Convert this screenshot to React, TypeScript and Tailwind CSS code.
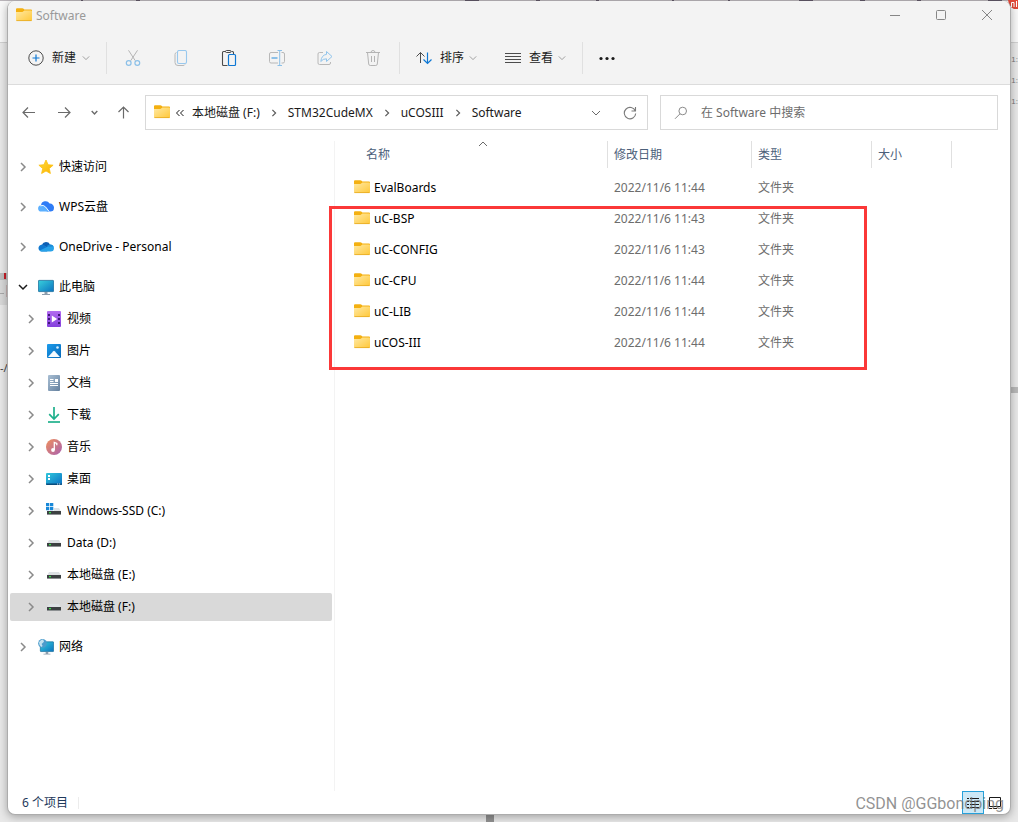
import React, { useState } from 'react';

type IconProps = { className?: string };

interface TreeItem {
  label: string;
  icon: React.ReactNode;
}

interface FileRow {
  name: string;
  modified: string;
  type: string;
}

function FolderIcon({ className = '' }: IconProps) {
  return (
    <svg viewBox="0 0 16 16" className={`h-4 w-4 shrink-0 ${className}`} aria-hidden="true">
      <defs>
        <linearGradient id="folder" x1="0" y1="0" x2="1" y2="1">
          <stop offset="0" stopColor="#ffe9a4" />
          <stop offset="1" stopColor="#ffc83a" />
        </linearGradient>
      </defs>
      <path d="M0 1.200Q0 .2 1 .2h5.200q.6 0 1 .4L8.400 1.500H15q1 0 1 1v8H0z" fill="#f4b010" />
      <path d="M0 4h6.400L8.400 2.400H15q1 0 1 1v8.500q0 1-1 1H1q-1 0-1-1z" fill="url(#folder)" />
      <path d="M.4 12.600h15.200" stroke="#e6a820" strokeWidth=".8" />
    </svg>
  );
}

function Chevron({ dir, className = '' }: { dir: 'right' | 'down' | 'up'; className?: string }) {
  const paths = {
    right: 'M3 1l4 4-4 4',
    down: 'M1 3l4 4 4-4',
    up: 'M1 7l4-4 4 4',
  };
  return (
    <svg viewBox="0 0 10 10" fill="none" stroke="currentColor" className={`shrink-0 ${className}`} aria-hidden="true">
      <path d={paths[dir]} />
    </svg>
  );
}

const iconClass = 'h-4 w-4 shrink-0';

const StarIcon = () => (
  <svg viewBox="0 0 16 16" className={iconClass} aria-hidden="true">
    <defs>
      <linearGradient id="star" x1="0" y1="0" x2="1" y2="1">
        <stop offset="0" stopColor="#ffdc3c" />
        <stop offset="1" stopColor="#fbb200" />
      </linearGradient>
    </defs>
    <path d="M8 1l2.1 4.7 5 .5-3.8 3.3 1.1 5L8 12l-4.400 2.500 1.100-5L.9 6.200l5-.5z" fill="url(#star)" stroke="#fcc010" strokeWidth=".8" strokeLinejoin="round" />
  </svg>
);

const WpsCloudIcon = () => (
  <svg viewBox="0 0 16 16" className={iconClass} aria-hidden="true">
    <path d="M3 6.400A4.600 4.600 0 0 1 11.600 4.600 4 4 0 0 1 16 8.700a3.900 3.900 0 0 1-3.800 3.900H9z" fill="#2f7cf6" />
    <path d="M3.200 6.200Q5.600 5.400 7.500 7.600l4.200 5H3.400A3.200 3.200 0 0 1 3.200 6.200z" fill="#5cb0ff" />
    <path d="M2.400 6.800q3-1.400 5.200 1.200l3.600 4.600" fill="none" stroke="#fff" strokeWidth=".9" />
  </svg>
);

const OneDriveIcon = () => (
  <svg viewBox="0 0 16 16" className={iconClass} aria-hidden="true">
    <path d="M4 5.600A4.400 4.400 0 0 1 12 5.400l-3 3.400z" fill="#0d5fb4" />
    <path d="M3.600 12.600A3.500 3.500 0 1 1 5.600 6L12 9.600l-3 3z" fill="#1078d0" />
    <path d="M12 5.400a3.700 3.700 0 0 1 4 3.700 3.500 3.500 0 0 1-3.600 3.500H3.600q-1.200 0-2.300-.8L10 7.400z" fill="#28a2e8" />
    <path d="M11.800 5.400q2.800 0 3.800 2.200L9.800 7.800 8.600 7z" fill="#1a8ad8" />
  </svg>
);

const Monitor = () => (
  <>
    <defs>
      <linearGradient id="screen" x1="0" y1="0" x2="1" y2="1">
        <stop offset="0" stopColor="#38d0dc" />
        <stop offset="1" stopColor="#0b72c0" />
      </linearGradient>
    </defs>
    <rect x=".4" y="1.4" width="15.2" height="11.2" rx=".6" fill="url(#screen)" stroke="#1a6f9c" strokeWidth=".8" />
    <path d="M6.500 13h3v2h-3zM4 15h8v.9H4z" fill="#8d9dac" />
  </>
);

const PcIcon = () => (
  <svg viewBox="0 0 16 16" className={iconClass} aria-hidden="true">
    <Monitor />
  </svg>
);

const NetworkIcon = () => (
  <svg viewBox="0 0 16 16" className={iconClass} aria-hidden="true">
    <g transform="translate(2 1.600) scale(.87)">
      <Monitor />
    </g>
    <circle cx="4.500" cy="4.400" r="4.300" fill="#4c9ccc" />
    <path d="M1 3.200Q3 .2 5.200.6L6 2.800 3.600 5l1 2-1.400 1Q1 6.800 1 3.200z" fill="#c3e2f0" />
  </svg>
);

const VideoIcon = () => (
  <svg viewBox="0 0 16 16" className={iconClass} aria-hidden="true">
    <defs>
      <linearGradient id="video" x1="0" y1="0" x2="0" y2="1">
        <stop offset="0" stopColor="#b36cf0" />
        <stop offset="1" stopColor="#8440dc" />
      </linearGradient>
    </defs>
    <rect x="1" y="0" width="14" height="16" rx="1" fill="url(#video)" />
    <path d="M2 3h2v2H2zM2 7h2v2H2zM2 11h2v2H2zM12 3h2v2h-2zM12 7h2v2h-2zM12 11h2v2h-2z" fill="#401878" />
    <path d="M5.800 4.600l5.400 3.400-5.400 3.400z" fill="#fff" />
  </svg>
);

const PictureIcon = () => (
  <svg viewBox="0 0 16 16" className={iconClass} aria-hidden="true">
    <defs>
      <linearGradient id="picture" x1="0" y1="0" x2="1" y2="1">
        <stop offset="0" stopColor="#1c9cec" />
        <stop offset="1" stopColor="#0668b8" />
      </linearGradient>
    </defs>
    <rect x="1" y="1" width="14" height="14" rx="1" fill="url(#picture)" />
    <path d="M2 14l5.300-5.800q.7-.7 1.400 0L14 14z" fill="#f4faff" />
    <circle cx="11.500" cy="4.500" r="1.300" fill="#d8f0ff" />
  </svg>
);

const DocumentIcon = () => (
  <svg viewBox="0 0 16 16" className={iconClass} aria-hidden="true">
    <defs>
      <linearGradient id="document" x1="0" y1="0" x2="1" y2="1">
        <stop offset="0" stopColor="#a9bfd4" />
        <stop offset="1" stopColor="#64809e" />
      </linearGradient>
    </defs>
    <rect x="2" y="0" width="12" height="16" rx="1" fill="url(#document)" />
    <path d="M4 4.500h3.500M4 6.500h3.500M4 8.500h8M4 10.500h8" stroke="#fff" />
    <path d="M9 4h3v3H9z" fill="#fff" />
  </svg>
);

const DownloadIcon = () => (
  <svg viewBox="0 0 16 16" className={iconClass} fill="none" stroke="#1fb08c" strokeWidth="1.700" aria-hidden="true">
    <path d="M8 0v12M3.200 7.200L8 12l4.800-4.800" />
    <path d="M2 15h12" />
  </svg>
);

const MusicIcon = () => (
  <svg viewBox="0 0 16 16" className={iconClass} aria-hidden="true">
    <defs>
      <linearGradient id="music" x1="0" y1="0" x2="1" y2="1">
        <stop offset="0" stopColor="#f0905c" />
        <stop offset="1" stopColor="#a860b0" />
      </linearGradient>
    </defs>
    <circle cx="8" cy="8" r="8" fill="url(#music)" />
    <circle cx="7" cy="11" r="1.900" fill="#fff" />
    <path d="M8.300 11V3.500l2.500 1v1.700" fill="none" stroke="#fff" strokeWidth="1.300" />
  </svg>
);

const DesktopIcon = () => (
  <svg viewBox="0 0 16 16" className={iconClass} aria-hidden="true">
    <defs>
      <linearGradient id="desktop" x1="0" y1="0" x2="1" y2="1">
        <stop offset="0" stopColor="#30c8dc" />
        <stop offset="1" stopColor="#0a70c4" />
      </linearGradient>
    </defs>
    <rect y="2" width="16" height="12" rx="1" fill="url(#desktop)" />
    <path d="M0 12.500h16v.5q0 1-1 1H1q-1 0-1-1z" fill="#0a4c7c" />
    <path d="M2 4h2v2H2zM2 7h2v2H2z" fill="#fff" />
    <path d="M11 13h1.200M13 13h1.200" stroke="#fff" strokeWidth=".8" />
  </svg>
);

const DriveIcon = ({ system = false }: { system?: boolean }) => (
  <svg viewBox="0 0 16 16" className={iconClass} aria-hidden="true">
    <path d="M3 5h10l2 3.500H1z" fill="#dde1e4" />
    <path d="M1 8h14v4H1z" fill="#3c4042" />
    <path d="M1 11h14v1H1z" fill="#8c9092" />
    <path d="M3 9h2v1.300H3z" fill="#38e048" />
    {system && (
      <>
        <path d="M0 0h8v8H0z" fill="#fff" />
        <path d="M0 0h3.300v3.300H0zM4 0h3.300v3.300H4zM0 4h3.300v3.300H0zM4 4h3.300v3.300H4z" fill="#1888d8" />
      </>
    )}
  </svg>
);

const CutIcon = () => (
  <svg viewBox="0 0 16 16" className={iconClass} fill="none" aria-hidden="true">
    <path d="M3.500.3l6.800 10.400M12.500.3L5.700 10.700" stroke="#b4b4b4" />
    <circle cx="3.700" cy="13" r="2.400" stroke="#8cc0e8" strokeWidth="1.200" />
    <circle cx="12.300" cy="13" r="2.400" stroke="#8cc0e8" strokeWidth="1.200" />
  </svg>
);

const CopyIcon = () => (
  <svg viewBox="0 0 16 16" className={iconClass} fill="none" aria-hidden="true">
    <path d="M3.500 2.500q-1.500.3-1.500 2v8Q2 15.500 5 15.500h5q1.500 0 2-1" stroke="#b8b8b8" />
    <rect x="4.500" y=".5" width="9" height="13" rx="1.500" stroke="#98c8ee" strokeWidth="1.100" />
  </svg>
);

const PasteIcon = () => (
  <svg viewBox="0 0 16 16" className={iconClass} fill="none" aria-hidden="true">
    <path d="M6.500 15.500h-4q-1 0-1-1v-12q0-1 1-1h2M10.500 1.500h1q1 0 1 1V4" stroke="#4c4c4c" strokeWidth="1.100" />
    <rect x="4.500" y=".5" width="5.500" height="2" rx="1" stroke="#4c4c4c" />
    <rect x="7.500" y="4.500" width="7" height="11" rx="1" fill="#f3f3f3" stroke="#0f78d4" strokeWidth="1.200" />
  </svg>
);

const RenameIcon = () => (
  <svg viewBox="0 0 16 16" className={iconClass} fill="none" aria-hidden="true">
    <path d="M9 2.500H2q-1.500 0-1.500 1.500v7.500Q.5 13 2 13h7M12.500 2.500H14q1.500 0 1.500 1.500v7.500q0 1.500-1.500 1.500h-1.500" stroke="#b8b8b8" />
    <path d="M2.500 8h6" stroke="#8cc0e8" strokeWidth="2" />
    <path d="M8.500.5h4.500M8.500 15.500h4.500M10.700.5v15" stroke="#8cc0e8" />
  </svg>
);

const ShareIcon = () => (
  <svg viewBox="0 0 16 16" className={iconClass} fill="none" aria-hidden="true">
    <path d="M6 2.500H2.500q-1.500 0-1.500 1.500v9q0 1.500 1.500 1.500h9.500q1.500 0 1.500-1.500v-1" stroke="#b8b8b8" />
    <path d="M9.500 1.500l5.500 5-5.500 5V8.800Q6 8.600 3.800 11.500 4.500 5 9.500 4.400z" stroke="#90c4ec" strokeLinejoin="round" />
  </svg>
);

const TrashIcon = () => (
  <svg viewBox="0 0 16 16" className={iconClass} fill="none" stroke="#b4b4b4" aria-hidden="true">
    <path d="M1 2.500h14M6 2.500Q6 .5 8 .5t2 2M2.500 2.500l1.200 11.500q.2 1.500 1.500 1.500h5.600q1.300 0 1.500-1.500L13.500 2.500M6.500 6v6M9.500 6v6" />
  </svg>
);

const files: FileRow[] = [
  { name: 'EvalBoards', modified: '2022/11/6 11:44', type: '文件夹' },
  { name: 'uC-BSP', modified: '2022/11/6 11:43', type: '文件夹' },
  { name: 'uC-CONFIG', modified: '2022/11/6 11:43', type: '文件夹' },
  { name: 'uC-CPU', modified: '2022/11/6 11:44', type: '文件夹' },
  { name: 'uC-LIB', modified: '2022/11/6 11:44', type: '文件夹' },
  { name: 'uCOS-III', modified: '2022/11/6 11:44', type: '文件夹' },
];

const roots: TreeItem[] = [
  { label: '快速访问', icon: <StarIcon /> },
  { label: 'WPS云盘', icon: <WpsCloudIcon /> },
  { label: 'OneDrive - Personal', icon: <OneDriveIcon /> },
];

const pcItems: TreeItem[] = [
  { label: '视频', icon: <VideoIcon /> },
  { label: '图片', icon: <PictureIcon /> },
  { label: '文档', icon: <DocumentIcon /> },
  { label: '下载', icon: <DownloadIcon /> },
  { label: '音乐', icon: <MusicIcon /> },
  { label: '桌面', icon: <DesktopIcon /> },
  { label: 'Windows-SSD (C:)', icon: <DriveIcon system /> },
  { label: 'Data (D:)', icon: <DriveIcon /> },
  { label: '本地磁盘 (E:)', icon: <DriveIcon /> },
  { label: '本地磁盘 (F:)', icon: <DriveIcon /> },
];

const tools = [
  { label: '剪切', icon: <CutIcon />, disabled: true },
  { label: '复制', icon: <CopyIcon />, disabled: true },
  { label: '粘贴', icon: <PasteIcon />, disabled: false },
  { label: '重命名', icon: <RenameIcon />, disabled: true },
  { label: '共享', icon: <ShareIcon />, disabled: true },
  { label: '删除', icon: <TrashIcon />, disabled: true },
];

const crumbs = ['本地磁盘 (F:)', 'STM32CudeMX', 'uCOSIII', 'Software'];

function TitleBar() {
  return (
    <header className="flex h-[30px] items-center pl-2 text-[#999999]">
      <FolderIcon />
      <h1 className="ml-1 flex-1">Software</h1>
      <div className="flex self-start">
        <button type="button" aria-label="最小化" className="flex h-7 w-[46px] items-center justify-center">
          <svg viewBox="0 0 10 10" className="h-[10px] w-[10px]" stroke="#868686">
            <path d="M0 5.500h10" />
          </svg>
        </button>
        <button type="button" aria-label="最大化" className="flex h-7 w-[46px] items-center justify-center">
          <svg viewBox="0 0 10 10" className="h-[10px] w-[10px]" stroke="#868686" fill="none">
            <rect x=".5" y=".5" width="9" height="9" rx="1" />
          </svg>
        </button>
        <button type="button" aria-label="关闭" className="flex h-7 w-[46px] items-center justify-center">
          <svg viewBox="0 0 10 10" className="h-[10px] w-[10px]" stroke="#868686">
            <path d="M0 0l10 10M10 0L0 10" />
          </svg>
        </button>
      </div>
    </header>
  );
}

function Toolbar() {
  return (
    <div role="toolbar" className="flex h-[54px] items-center border-b border-[#dcdcdc] pl-5 pt-px text-[#1a1a1a]">
      <button type="button" className="flex items-center">
        <svg viewBox="0 0 16 16" className={iconClass} fill="none" aria-hidden="true">
          <circle cx="8" cy="8" r="7.200" stroke="#4c4c4c" />
          <path d="M8 4.500v7M4.500 8h7" stroke="#0f78d4" strokeWidth="1.200" />
        </svg>
        <span className="ml-2">新建</span>
        <Chevron dir="down" className="ml-[6px] h-2 w-2 text-[#8a8a8a]" />
      </button>
      <span className="ml-4 h-8 w-px bg-[#e0e0e0]" />
      <div className="ml-[18px] flex gap-8">
        {tools.map((tool) => (
          <button key={tool.label} type="button" aria-label={tool.label} disabled={tool.disabled}>
            {tool.icon}
          </button>
        ))}
      </div>
      <span className="ml-[18px] h-8 w-px bg-[#e0e0e0]" />
      <button type="button" className="ml-4 flex items-center">
        <svg viewBox="0 0 16 16" className={iconClass} fill="none" aria-hidden="true">
          <path d="M4.500 13V2.500M.5 6.500l4-4 4 4" stroke="#4c4c4c" />
          <path d="M11.500 2.500V13.500M7.500 9.500l4 4 4-4" stroke="#0f78d4" strokeWidth="1.200" />
        </svg>
        <span className="ml-2">排序</span>
        <Chevron dir="down" className="ml-[5px] h-2 w-2 text-[#8a8a8a]" />
      </button>
      <button type="button" className="ml-7 flex items-center">
        <svg viewBox="0 0 16 16" className={iconClass} stroke="#4c4c4c" aria-hidden="true">
          <path d="M0 3.500h16M0 6.500h16M0 9.500h16M0 12.500h16" />
        </svg>
        <span className="ml-2">查看</span>
        <Chevron dir="down" className="ml-[5px] h-2 w-2 text-[#8a8a8a]" />
      </button>
      <span className="ml-4 h-8 w-px bg-[#e0e0e0]" />
      <button type="button" aria-label="更多" className="ml-4">
        <svg viewBox="0 0 16 16" className={iconClass} fill="#1a1a1a" aria-hidden="true">
          <circle cx="2" cy="8.500" r="1.600" />
          <circle cx="8" cy="8.500" r="1.600" />
          <circle cx="14" cy="8.500" r="1.600" />
        </svg>
      </button>
    </div>
  );
}

function AddressRow() {
  const [query, setQuery] = useState('');

  return (
    <div className="flex h-[51px] items-center pr-3 pt-1 text-[#1a1a1a]">
      <nav aria-label="导航" className="flex w-[137px] shrink-0 items-center pl-[14px] text-[#6a6a6a]">
        <button type="button" aria-label="后退">
          <svg viewBox="0 0 14 14" className="h-[14px] w-[14px]" fill="none" stroke="currentColor" strokeWidth="1.200">
            <path d="M13 6.500H1M6 1.500l-5 5 5 5" />
          </svg>
        </button>
        <button type="button" aria-label="前进" className="ml-[21px]">
          <svg viewBox="0 0 14 14" className="h-[14px] w-[14px]" fill="none" stroke="currentColor" strokeWidth="1.200">
            <path d="M1 6.500h12M8 1.500l5 5-5 5" />
          </svg>
        </button>
        <button type="button" aria-label="最近浏览的位置" className="ml-5">
          <Chevron dir="down" className="h-[7px] w-[7px] stroke-2" />
        </button>
        <button type="button" aria-label="上移" className="ml-[19px]">
          <svg viewBox="0 0 14 14" className="h-[14px] w-[14px]" fill="none" stroke="currentColor" strokeWidth="1.200">
            <path d="M6.500 12.500V1M1.500 6l5-5 5 5" />
          </svg>
        </button>
      </nav>
      <div className="flex h-[35px] min-w-0 flex-1 items-center border border-[#d9d9d9] bg-white pl-2">
        <FolderIcon />
        <svg viewBox="0 0 8 8" className="ml-[6px] h-2 w-2 shrink-0" fill="none" stroke="#1a1a1a" aria-hidden="true">
          <path d="M3.500 1l-3 3 3 3M7.500 1l-3 3 3 3" />
        </svg>
        <ol className="ml-2 flex flex-1 items-center gap-[10px] whitespace-nowrap">
          {crumbs.map((crumb, index) => (
            <li key={crumb} className="flex items-center gap-[10px]">
              {index > 0 && <Chevron dir="right" className="h-2 w-2 stroke-[1.5] text-[#5a5a5a]" />}
              <a href="#">{crumb}</a>
            </li>
          ))}
        </ol>
        <button type="button" aria-label="以前的位置">
          <Chevron dir="down" className="h-[10px] w-[10px] text-[#6a6a6a]" />
        </button>
        <button type="button" aria-label="刷新" className="ml-[22px] mr-[10px]">
          <svg viewBox="0 0 14 14" className="h-[14px] w-[14px]" fill="none" stroke="#7a7a7a" strokeWidth="1.100">
            <path d="M12.300 5A5.700 5.700 0 1 0 12.700 7.500M12.500 1v4h-4" />
          </svg>
        </button>
      </div>
      <label className="ml-3 flex h-[35px] w-[338px] items-center border border-[#d9d9d9] bg-white pl-[13px]">
        <svg viewBox="0 0 14 14" className="h-[14px] w-[14px] shrink-0" fill="none" stroke="#8a8a8a" aria-hidden="true">
          <circle cx="8.700" cy="5" r="3.800" />
          <path d="M6 7.800L1 12.800" />
        </svg>
        <input
          type="search"
          aria-label="搜索"
          value={query}
          onChange={(e) => setQuery(e.target.value)}
          placeholder="在 Software 中搜索"
          className="ml-[13px] min-w-0 flex-1 bg-transparent outline-none placeholder:text-[#6c6c6c]"
        />
      </label>
    </div>
  );
}

function Sidebar() {
  const [selected, setSelected] = useState('本地磁盘 (F:)');

  const row = (item: TreeItem, child: boolean, open = false) => (
    <li key={item.label}>
      <button
        type="button"
        onClick={() => setSelected(item.label)}
        className={`flex h-7 w-full items-center rounded-xs ${child ? 'pl-4' : 'pl-2'} ${
          selected === item.label ? 'bg-[#d9d9d9]' : ''
        }`}
      >
        <Chevron
          dir={open ? 'down' : 'right'}
          className={`h-[10px] w-[10px] stroke-[1.5] ${open ? 'text-[#1a1a1a]' : 'text-[#8a8a8a]'}`}
        />
        <span className="ml-[10px]">{item.icon}</span>
        <span className="ml-[5px]">{item.label}</span>
      </button>
    </li>
  );

  return (
    <nav aria-label="文件夹" className="w-[327px] shrink-0 pt-[5px]">
      <div className="flex h-full flex-col gap-3 border-r border-[#f3f3f3] pl-[2px] pr-[2px] pt-3">
        <ul className="flex flex-col gap-3">{roots.map((item) => row(item, false))}</ul>
        <ul className="flex flex-col gap-1">
          {row({ label: '此电脑', icon: <PcIcon /> }, false, true)}
          {pcItems.map((item) => row(item, true))}
        </ul>
        <ul>{row({ label: '网络', icon: <NetworkIcon /> }, false)}</ul>
      </div>
    </nav>
  );
}

function HeaderCell({ label, first = false }: { label: string; first?: boolean }) {
  return (
    <th scope="col" className="p-0 pt-[5px] align-top font-normal">
      <button
        type="button"
        className={`relative flex h-[27px] w-full items-center border-r border-[#e0e0e0] text-left text-[#4c607a] ${
          first ? 'pl-[31px]' : 'pl-[6px]'
        }`}
      >
        {label}
        {first && <Chevron dir="up" className="absolute left-[143px] top-[-2px] h-[10px] w-[10px] text-[#6a6a6a]" />}
      </button>
    </th>
  );
}

function FileList() {
  return (
    <section className="relative min-w-0 flex-1">
      <table className="w-full table-fixed text-left">
        <colgroup>
          <col className="w-[273px]" />
          <col className="w-[144px]" />
          <col className="w-[120px]" />
          <col className="w-[80px]" />
          <col />
        </colgroup>
        <thead>
          <tr className="h-9">
            <HeaderCell label="名称" first />
            <HeaderCell label="修改日期" />
            <HeaderCell label="类型" />
            <HeaderCell label="大小" />
            <td />
          </tr>
        </thead>
        <tbody>
          {files.map((file) => (
            <tr key={file.name} className="h-[31px] text-[#6d6d6d]">
              <td className="p-0 pl-[19px]">
                <div className="flex items-center gap-1 text-black">
                  <FolderIcon />
                  {file.name}
                </div>
              </td>
              <td className="p-0 pl-[6px]">{file.modified}</td>
              <td className="p-0 pl-[6px]">{file.type}</td>
              <td />
              <td />
            </tr>
          ))}
        </tbody>
      </table>
      <div className="pointer-events-none absolute left-[-6px] top-[70px] h-[164px] w-[538px] border-3 border-[#fb3838]" />
    </section>
  );
}

function StatusBar() {
  return (
    <footer className="relative flex h-[23px] items-center pl-[14px] text-[#1e395b]">
      <span>6 个项目</span>
      <span className="ml-[10px] h-3 w-px bg-[#ececec]" />
      <button
        type="button"
        aria-label="详细信息"
        className="ml-auto flex h-[23px] w-[22px] items-center justify-center border border-[#26a0da] bg-[#cce8f6]"
      >
        <svg viewBox="0 0 12 11" className="h-[11px] w-3" stroke="#1a1a1a">
          <path d="M0 1.500h2M0 4.500h2M0 7.500h2M0 10.500h2M3 1.500h9M3 4.500h9M3 7.500h9M3 10.500h9" />
        </svg>
      </button>
      <button type="button" aria-label="大图标" className="ml-1 mr-[9px]">
        <svg viewBox="0 0 13 12" className="h-3 w-[13px]" fill="none" stroke="#1a1a1a">
          <path d="M1.500.5h11v9h-11zM1 11.500h3M5 11.500h4" />
        </svg>
      </button>
      <p className="absolute bottom-0 right-[6px] font-[Roboto,'Liberation_Sans',sans-serif] text-base leading-5 text-[#6e6e6e]/75">
        CSDN @GGbondping
      </p>
    </footer>
  );
}

// Slivers of the windows that lie behind the explorer.
function Backdrop() {
  return (
    <div aria-hidden="true" className="absolute inset-0 overflow-hidden text-[#777777]">
      <div className="absolute inset-x-0 top-0 h-[43px] border-b border-[#d0d0d0] bg-[#f8f8f8]" />
      <svg className="absolute inset-x-0 top-0 h-px w-full" preserveAspectRatio="none">
        <path d="M0 .5h1010" stroke="#b9b4b9" />
        <path
          d="M81 .5h2M136 .5h4M465 .5h14M536 .5h4M596 .5h3M672 .5h2M728 .5h2M799 .5h14M860 .5h5M917 .5h4M988 .5h14"
          stroke="#5f5766"
        />
      </svg>
      <div className="absolute left-0 top-[273px] h-[7px] w-2 bg-[#bdbdbd]" />
      <div className="absolute left-0 top-[280px] h-[25px] w-2 bg-[#d8d8d8]" />
      <div className="absolute left-1 top-[273px] h-[6px] w-[2px] bg-[#c81e28]" />
      <div className="absolute left-0 top-[293px] h-px w-1 bg-[#a8a8a8]" />
      <div className="absolute left-[6px] top-[285px] h-3 w-[2px] bg-[#c8b4b4]" />
      <span className="absolute left-0 top-[361px] text-[11px] text-[#444444]">-/</span>
      <div className="absolute right-0 top-[387px] h-[6px] w-2 bg-[#b8b8b8]" />
      <svg viewBox="0 0 10 9" className="absolute right-0 top-0 h-[9px] w-[10px]">
        <path d="M0 0h10v9H6Q1 7 0 0z" fill="#e04838" />
        <path d="M3.500 7V2.500h2.500V7M8.500 7V1" fill="none" stroke="#fff" />
      </svg>
      <div className="absolute right-0 top-[52px] flex flex-col gap-[5px] font-['Liberation_Sans',sans-serif] text-[8px] leading-4">
        <span>1:</span>
        <span>1:</span>
        <span>1:</span>
      </div>
      <div className="absolute bottom-0 left-[486px] h-2 w-2 bg-[#909090]" />
    </div>
  );
}

export default function App() {
  return (
    <div className="relative flex h-screen flex-col bg-[#e8e8e8] px-[7px] pb-[7px] pt-px font-['Noto_Sans','Noto_Sans_CJK_SC',sans-serif] text-xs text-black">
      <Backdrop />
      <main className="relative flex min-h-0 flex-1 flex-col overflow-hidden rounded-lg border border-t-0 border-[#acacac] bg-white shadow-[0_2px_8px_rgba(0,0,0,0.3)]">
        <div className="bg-[#f3f3f3]">
          <TitleBar />
          <Toolbar />
        </div>
        <AddressRow />
        <div className="flex min-h-0 flex-1">
          <Sidebar />
          <FileList />
        </div>
        <StatusBar />
      </main>
    </div>
  );
}
